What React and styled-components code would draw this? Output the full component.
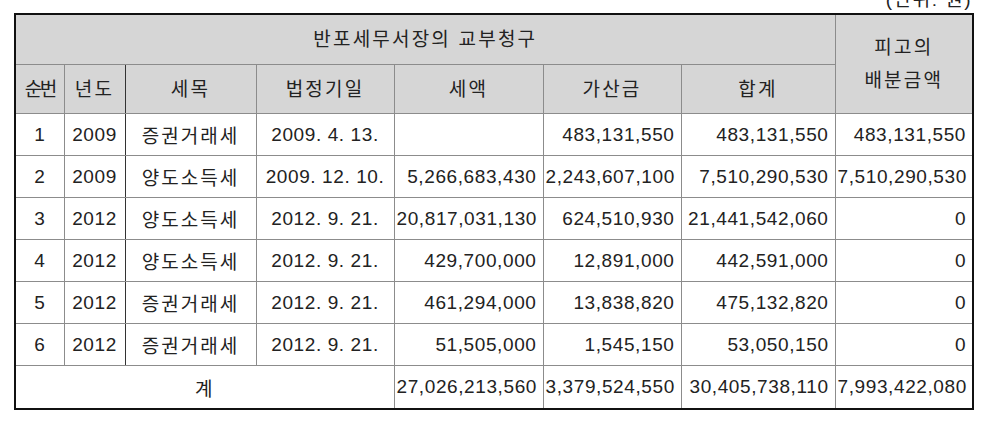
import React from 'react'
import styled, { createGlobalStyle } from 'styled-components'

const GlobalStyle = createGlobalStyle`
    html, body {
        margin: 0;
        padding: 0;
        background: #fff;
    }
    body {
        font-family: "Liberation Sans", "Noto Sans CJK KR", sans-serif;
        color: #222;
    }
`

const Page = styled.div`
    width: 958px;
    padding: 0 15px 0 14px;
    overflow: hidden;
    height: 425px;
`

const Unit = styled.div`
    margin-top: -11px;
    height: 23px;
    line-height: 22px;
    font-size: 19px;
    letter-spacing: 1.5px;
    text-align: right;
`

const Table = styled.table`
    margin-top: 1px;
    width: 958px;
    border-collapse: collapse;
    table-layout: fixed;
    border: 2px solid #111;
    font-size: 19px;
    letter-spacing: 0.6px;
`

const Head = styled.th`
    background: #d6d6d6;
    font-weight: normal;
    height: ${({ $h }) => $h || 48}px;
    padding: 0;
    border: 1px solid #8c8c8c;
    border-right-color: ${({ $dark }) => ($dark ? '#333' : '#8c8c8c')};
    letter-spacing: ${({ $tight }) => ($tight ? '-2.5px' : '2.2px')};
    line-height: 33px;
    text-align: center;
    white-space: nowrap;
    &:last-child {
        border-right-color: #111;
    }
`

const Cell = styled.td`
    height: ${({ $h }) => $h || 41}px;
    padding: 0 ${({ $align }) => ($align === 'right' ? '6px' : '2px')} 0 2px;
    border: 1px solid #8c8c8c;
    border-right-color: ${({ $dark }) => ($dark ? '#333' : '#8c8c8c')};
    text-align: ${({ $align }) => $align || 'center'};
    letter-spacing: ${({ $ko }) => ($ko ? '2px' : '0.6px')};
    white-space: nowrap;
    &:last-child {
        border-right-color: #111;
    }
`

const widths = [49, 61, 131, 138, 149, 138, 154, 138]

const rows = [
    ['1', '2009', '증권거래세', '2009. 4. 13.', '', '483,131,550', '483,131,550', '483,131,550'],
    ['2', '2009', '양도소득세', '2009. 12. 10.', '5,266,683,430', '2,243,607,100', '7,510,290,530', '7,510,290,530'],
    ['3', '2012', '양도소득세', '2012. 9. 21.', '20,817,031,130', '624,510,930', '21,441,542,060', '0'],
    ['4', '2012', '양도소득세', '2012. 9. 21.', '429,700,000', '12,891,000', '442,591,000', '0'],
    ['5', '2012', '증권거래세', '2012. 9. 21.', '461,294,000', '13,838,820', '475,132,820', '0'],
    ['6', '2012', '증권거래세', '2012. 9. 21.', '51,505,000', '1,545,150', '53,050,150', '0'],
]

const total = ['27,026,213,560', '3,379,524,550', '30,405,738,110', '7,993,422,080']

export default function App() {
    return (
        <Page>
            <GlobalStyle />
            <Unit>(단위: 원)</Unit>
            <Table>
                <colgroup>
                    {widths.map((w, i) => (
                        <col key={i} style={{ width: w }} />
                    ))}
                </colgroup>
                <thead>
                    <tr>
                        <Head colSpan={7} $h={49}>
                            반포세무서장의 교부청구
                        </Head>
                        <Head rowSpan={2}>
                            피고의
                            <br />
                            배분금액
                        </Head>
                    </tr>
                    <tr>
                        <Head $tight>순번</Head>
                        <Head $dark>년도</Head>
                        <Head>세목</Head>
                        <Head>법정기일</Head>
                        <Head>세액</Head>
                        <Head>가산금</Head>
                        <Head>합계</Head>
                    </tr>
                </thead>
                <tbody>
                    {rows.map((r, i) => (
                        <tr key={i}>
                            <Cell>{r[0]}</Cell>
                            <Cell $dark>{r[1]}</Cell>
                            <Cell $ko>{r[2]}</Cell>
                            <Cell>{r[3]}</Cell>
                            {r.slice(4).map((v, j) => (
                                <Cell key={j} $align="right">
                                    {v}
                                </Cell>
                            ))}
                        </tr>
                    ))}
                    <tr>
                        <Cell colSpan={4} $h={42} $ko>
                            계
                        </Cell>
                        {total.map((v, j) => (
                            <Cell key={j} $align="right">
                                {v}
                            </Cell>
                        ))}
                    </tr>
                </tbody>
            </Table>
        </Page>
    )
}
